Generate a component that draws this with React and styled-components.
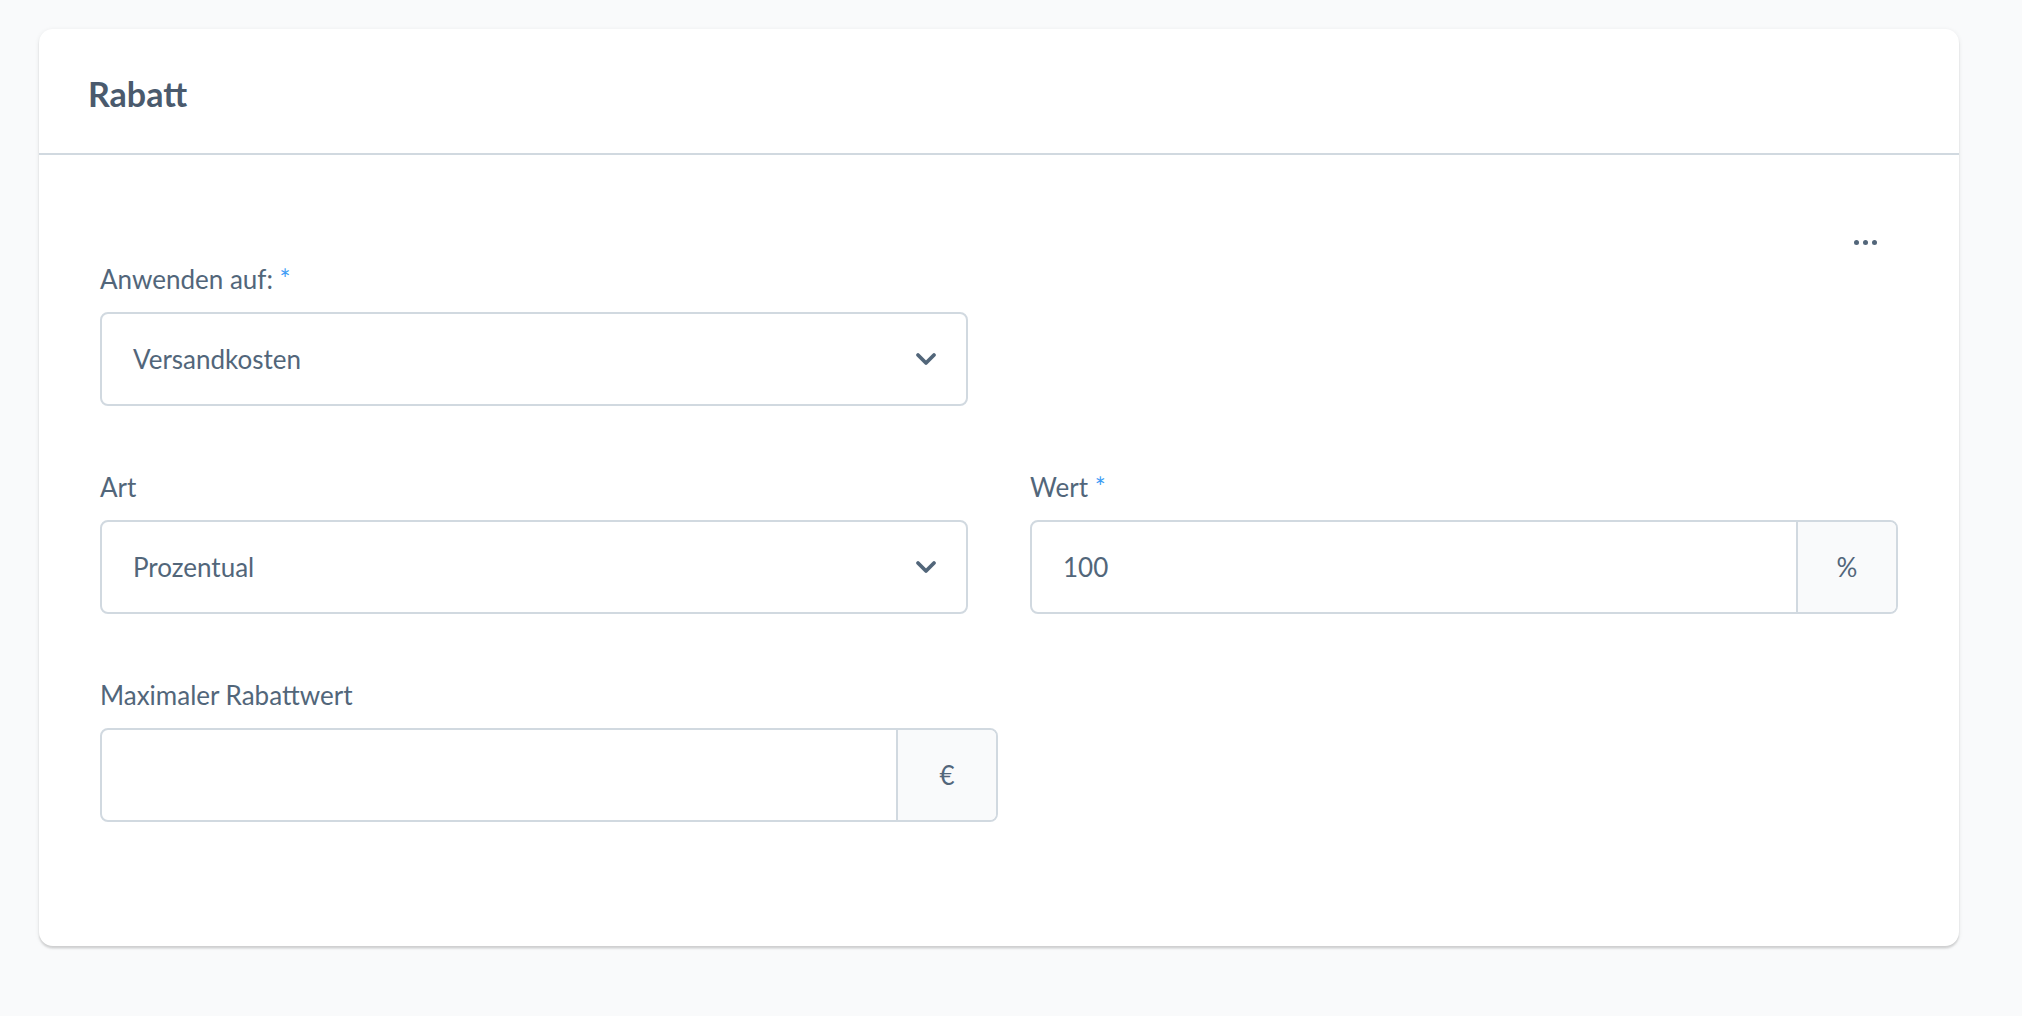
import styled, { createGlobalStyle } from "styled-components";

const GlobalStyle = createGlobalStyle`
  html, body {
    margin: 0;
    padding: 0;
    background: #f9fafb;
    font-family: Lato, "Noto Sans", sans-serif;
    color: #52667a;
  }
  * { box-sizing: border-box; }
`

const Page = styled.div`
  padding: 29px 0 60px 39px;
`

const Card = styled.div`
  width: 1920px;
  background: #fff;
  border-radius: 14px;
  box-shadow: 0 2px 2px rgba(0, 0, 0, 0.08), 0 3px 2px rgba(0, 0, 0, 0.06), 0 1px 5px rgba(0, 0, 0, 0.08);
`

const Header = styled.div`
  height: 126px;
  padding: 4px 49px 0;
  display: flex;
  align-items: center;
  border-bottom: 2px solid #d1d9e0;
`

const Title = styled.h2`
  margin: 0;
  font-size: 34px;
  font-weight: 700;
  color: #4a5a6d;
`

const Body = styled.div`
  padding: 67px 61px 124px;
  display: flex;
  flex-direction: column;
`

const Toolbar = styled.div`
  display: flex;
  justify-content: flex-end;
`

const DotsButton = styled.button`
  width: 48px;
  height: 40px;
  margin-right: 9px;
  padding: 0;
  border: none;
  background: transparent;
  display: flex;
  align-items: center;
  justify-content: center;
  gap: 4px;
  cursor: pointer;

  span {
    width: 5px;
    height: 5px;
    border-radius: 50%;
    background: #52667a;
  }
`

const Row = styled.div`
  display: grid;
  grid-template-columns: 868px 868px;
  column-gap: 62px;
  margin-bottom: 64px;
  &:last-child { margin-bottom: 0; }
`

const Field = styled.div`
  display: flex;
  flex-direction: column;
  width: ${(p) => p.$width || "auto"};
`

const Label = styled.label`
  font-size: 26px;
  line-height: 34px;
  margin-bottom: 16px;
  color: #52667a;

  em {
    font-style: normal;
    color: #3d9cf5;
  }
`

const SelectBox = styled.div`
  position: relative;
  height: 94px;
  border: 2px solid #d1d9e0;
  border-radius: 8px;
  background: #fff;
  display: flex;
  align-items: center;
  padding: 0 31px;
  font-size: 26px;
  color: #52667a;

  svg {
    position: absolute;
    right: 29px;
    top: 50%;
    transform: translateY(-50%);
  }
`

const InputGroup = styled.div`
  height: 94px;
  border: 2px solid #d1d9e0;
  border-radius: 8px;
  overflow: hidden;
  display: flex;
  background: #fff;
`

const TextInput = styled.input`
  flex: 1;
  min-width: 0;
  border: none;
  outline: none;
  padding: 0 31px;
  font-family: inherit;
  font-size: 26px;
  color: #52667a;
  background: transparent;
`

const Suffix = styled.div`
  width: 100px;
  border-left: 2px solid #d1d9e0;
  background: #f9fafb;
  display: flex;
  align-items: center;
  justify-content: center;
  font-size: 26px;
  color: #52667a;
`

function Chevron() {
  return (
    <svg width="22" height="14" viewBox="0 0 22 14">
      <polyline points="3,3 11,11 19,3" fill="none" stroke="#52667a" strokeWidth="3.8" strokeLinecap="round" strokeLinejoin="round" />
    </svg>
  );
}

function Select({ value }) {
  return (
    <SelectBox>
      {value}
      <Chevron />
    </SelectBox>
  );
}

export default function App() {
  return (
    <>
      <GlobalStyle />
      <Page>
        <Card>
          <Header>
            <Title>Rabatt</Title>
          </Header>
          <Body>
            <Toolbar>
              <DotsButton aria-label="Mehr">
                <span />
                <span />
                <span />
              </DotsButton>
            </Toolbar>
            <Row>
              <Field>
                <Label>Anwenden auf: <em>*</em></Label>
                <Select value="Versandkosten" />
              </Field>
            </Row>
            <Row>
              <Field>
                <Label>Art</Label>
                <Select value="Prozentual" />
              </Field>
              <Field>
                <Label>Wert <em>*</em></Label>
                <InputGroup>
                  <TextInput defaultValue="100" />
                  <Suffix>%</Suffix>
                </InputGroup>
              </Field>
            </Row>
            <Row>
              <Field $width="898px">
                <Label>Maximaler Rabattwert</Label>
                <InputGroup>
                  <TextInput />
                  <Suffix>€</Suffix>
                </InputGroup>
              </Field>
            </Row>
          </Body>
        </Card>
      </Page>
    </>
  );
}
